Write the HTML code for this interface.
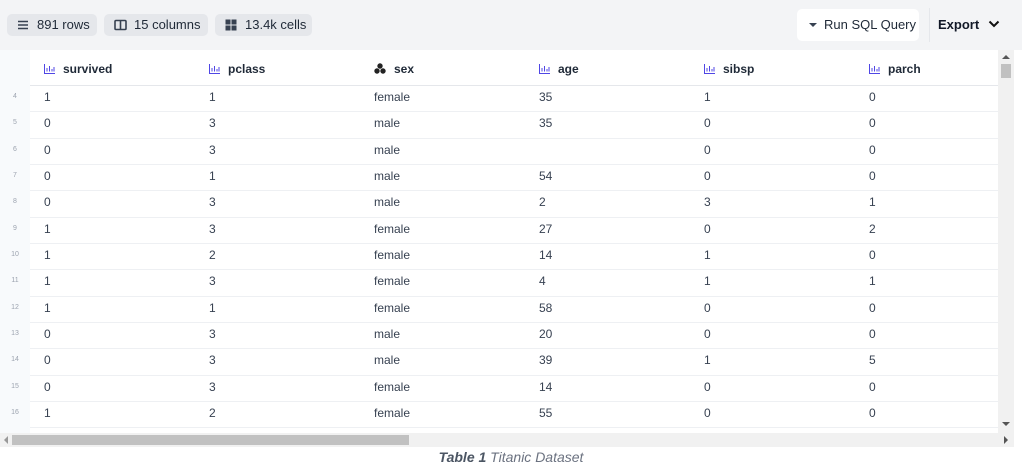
<!DOCTYPE html>
<html><head><style>
*{box-sizing:border-box;margin:0;padding:0}
body{width:1022px;height:471px;background:#fff;font-family:"Liberation Sans",sans-serif;position:relative;overflow:hidden;color:#374151}
.top{position:absolute;left:0;top:0;width:1022px;height:50px;background:#f3f4f6}
.pill{position:absolute;top:14px;height:22px;background:#e5e7eb;border-radius:5px;font-size:13px;color:#1f2937;line-height:22px;padding-left:30px}
.pill svg{position:absolute;left:10px;top:5px}
.run{position:absolute;left:797px;top:9px;width:122px;height:32px;background:#fff;border-radius:5px;font-size:13px;color:#1f2937;line-height:32px;padding-left:27px}
.run:before{content:"";position:absolute;left:12px;top:14px;border-left:4px solid transparent;border-right:4px solid transparent;border-top:4px solid #374151}
.div{position:absolute;left:929px;top:8px;width:1px;height:34px;background:#e5e7eb}
.exp{position:absolute;left:938px;top:9px;font-size:13px;line-height:32px;color:#111827;font-weight:bold}
.rn{position:absolute;left:0;top:50px;width:30px;height:383px;background:#f8fafc}
.hdr{position:absolute;top:50px;height:36px;line-height:38px;font-size:12px;font-weight:bold;color:#1f2937}
.hdr svg{vertical-align:-1px;margin-right:8px}
.row{position:absolute;left:30px;width:968px;height:26.33px;border-bottom:1px solid #eef0f3}
.c{position:absolute;font-size:12px;color:#374151}
.n{position:absolute;left:0;width:30px;font-size:7px;color:#9ca3af;text-align:center}
.vs{position:absolute;left:998px;top:50px;width:16px;height:383px;background:#f1f1f1}
.hs{position:absolute;left:0;top:433px;width:1014px;height:14px;background:#f1f1f1}
.cap{position:absolute;left:0;top:449px;width:1022px;text-align:center;font-size:14px;font-style:italic;color:#6b7280}
</style></head><body>
<div class="top"></div>
<div class="pill" style="left:7px;width:90px"><svg width="12" height="12"><path d="M1 2.5h10M1 6h10M1 9.5h10" stroke="#374151" stroke-width="1.6"/></svg>891 rows</div>
<div class="pill" style="left:104px;width:104px"><svg width="13" height="12"><rect x="1" y="1.5" width="11" height="9" rx="1" fill="none" stroke="#374151" stroke-width="1.6"/><path d="M6.5 1.5v9" stroke="#374151" stroke-width="1.6"/></svg>15 columns</div>
<div class="pill" style="left:215px;width:97px"><svg width="12" height="12"><rect x="0.5" y="0.5" width="5" height="5" fill="#374151"/><rect x="6.5" y="0.5" width="5" height="5" fill="#374151"/><rect x="0.5" y="6.5" width="5" height="5" fill="#374151"/><rect x="6.5" y="6.5" width="5" height="5" fill="#374151"/></svg>13.4k cells</div>
<div class="run">Run SQL Query</div>
<div class="div"></div>
<div class="exp">Export <svg width="12" height="10" style="margin-left:5px"><path d="M1.5 2.5l4.5 4.5 4.5-4.5" fill="none" stroke="#111" stroke-width="2"/></svg></div>
<div class="rn"></div>
<div style="position:absolute;left:30px;top:85px;width:968px;height:1px;background:#e5e7eb"></div>
<div class="hdr" style="left:44px"><svg width="11" height="10"><path d="M0.5 0v9.5H11M3 7.5V4M5.5 7.5V2M8 7.5V5M10 7.5V3" fill="none" stroke="#4f46e5" stroke-width="1"/></svg>survived</div>
<div class="hdr" style="left:209px"><svg width="11" height="10"><path d="M0.5 0v9.5H11M3 7.5V4M5.5 7.5V2M8 7.5V5M10 7.5V3" fill="none" stroke="#4f46e5" stroke-width="1"/></svg>pclass</div>
<div class="hdr" style="left:374px"><svg width="12" height="11"><circle cx="6" cy="3" r="2.7" fill="#222"/><circle cx="3" cy="8" r="2.7" fill="#222"/><circle cx="9" cy="8" r="2.7" fill="#222"/></svg>sex</div>
<div class="hdr" style="left:539px"><svg width="11" height="10"><path d="M0.5 0v9.5H11M3 7.5V4M5.5 7.5V2M8 7.5V5M10 7.5V3" fill="none" stroke="#4f46e5" stroke-width="1"/></svg>age</div>
<div class="hdr" style="left:704px"><svg width="11" height="10"><path d="M0.5 0v9.5H11M3 7.5V4M5.5 7.5V2M8 7.5V5M10 7.5V3" fill="none" stroke="#4f46e5" stroke-width="1"/></svg>sibsp</div>
<div class="hdr" style="left:869px"><svg width="11" height="10"><path d="M0.5 0v9.5H11M3 7.5V4M5.5 7.5V2M8 7.5V5M10 7.5V3" fill="none" stroke="#4f46e5" stroke-width="1"/></svg>parch</div>
<div id="rows"></div>
<script>
var d=[[4,1,1,'female',35,1,0],[5,0,3,'male',35,0,0],[6,0,3,'male','',0,0],[7,0,1,'male',54,0,0],[8,0,3,'male',2,3,1],[9,1,3,'female',27,0,2],[10,1,2,'female',14,1,0],[11,1,3,'female',4,1,1],[12,1,1,'female',58,0,0],[13,0,3,'male',20,0,0],[14,0,3,'male',39,1,5],[15,0,3,'female',14,0,0],[16,1,2,'female',55,0,0]];
var xs=[44,209,374,539,704,869],h='';
d.forEach(function(r,i){var t=86+i*26.33;
h+='<div class="row" style="top:'+t+'px"></div><div class="n" style="top:'+(t+7)+'px">'+r[0]+'</div>';
for(var j=1;j<7;j++)h+='<div class="c" style="left:'+xs[j-1]+'px;top:'+(t+4)+'px">'+r[j]+'</div>';});
document.getElementById('rows').innerHTML=h;
</script>
<div class="vs"><div style="position:absolute;left:4px;top:5px;border-left:4px solid transparent;border-right:4px solid transparent;border-bottom:4px solid #555"></div><div style="position:absolute;left:3px;top:14px;width:10px;height:14px;background:#c1c1c1"></div><div style="position:absolute;left:4px;top:372px;border-left:4px solid transparent;border-right:4px solid transparent;border-top:4px solid #555"></div></div>
<div class="hs"><div style="position:absolute;left:4px;top:3px;border-top:4px solid transparent;border-bottom:4px solid transparent;border-right:4px solid #999"></div><div style="position:absolute;left:12px;top:2px;width:397px;height:10px;background:#c1c1c1"></div><div style="position:absolute;left:1004px;top:3px;border-top:4px solid transparent;border-bottom:4px solid transparent;border-left:4px solid #555"></div></div>
<div class="cap"><b style="color:#4b5563">Table 1</b> Titanic Dataset</div>
</body></html>
